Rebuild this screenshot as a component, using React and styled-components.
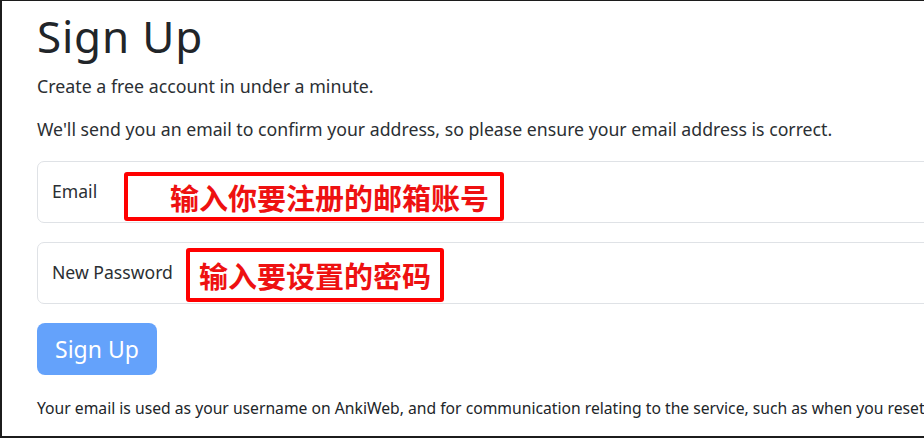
import React from "react";
import styled, { createGlobalStyle } from "styled-components";

const GlobalStyle = createGlobalStyle`
  html, body {
    margin: 0;
    padding: 0;
    background: #ffffff;
  }
  body {
    font-family: "Noto Sans", "Open Sans", Arial, sans-serif;
    color: #212529;
  }
`;

const fields = [
  {
    label: "Email",
    note: "输入你要注册的邮箱账号",
    noteLeft: 86,
    noteTop: 10,
    noteWidth: 380,
    noteHeight: 49,
    notePad: 42,
  },
  {
    label: "New Password",
    note: "输入要设置的密码",
    noteLeft: 148,
    noteTop: 5,
    noteWidth: 258,
    noteHeight: 54,
    notePad: 9,
  },
];

const App = () => {
  return (
    <>
      <GlobalStyle />
      <Frame>
        <Content>
          <Title>Sign Up</Title>
          <Lead>Create a free account in under a minute.</Lead>
          <Notice>
            We'll send you an email to confirm your address, so please ensure
            your email address is correct.
          </Notice>
          <Form>
            {fields.map((field) => (
              <Field key={field.label}>
                <FieldLabel>{field.label}</FieldLabel>
                <Annotation
                  $left={field.noteLeft}
                  $top={field.noteTop}
                  $width={field.noteWidth}
                  $height={field.noteHeight}
                  $pad={field.notePad}
                >
                  {field.note}
                </Annotation>
              </Field>
            ))}
            <SubmitButton type="button">Sign Up</SubmitButton>
          </Form>
          <FinePrint>
            Your email is used as your username on AnkiWeb, and for
            communication relating to the service, such as when you reset your
            password.
          </FinePrint>
        </Content>
      </Frame>
    </>
  );
};

export default App;

const Frame = styled.div`
  width: 924px;
  height: 438px;
  box-sizing: border-box;
  border-left: 2px solid #1c1c1c;
  border-top: 1px solid #1c1c1c;
  border-bottom: 2px solid #1c1c1c;
  overflow: hidden;
  background: #ffffff;
`;

const Content = styled.div`
  padding: 10px 0 0 35px;
  display: flex;
  flex-direction: column;
`;

const Title = styled.h1`
  margin: 0;
  font-size: 44px;
  line-height: 51px;
  font-weight: 400;
  color: #212529;
  letter-spacing: 0.8px;
`;

const Lead = styled.p`
  margin: 12px 0 0;
  font-size: 17.8px;
  line-height: 24px;
  color: #2b2f33;
  white-space: nowrap;
`;

const Notice = styled(Lead)`
  margin-top: 19px;
  font-size: 17.7px;
`;

const Form = styled.div`
  margin-top: 20px;
  display: flex;
  flex-direction: column;
  align-items: flex-start;
  gap: 19px;
`;

const Field = styled.div`
  position: relative;
  width: 1000px;
  height: 62px;
  box-sizing: border-box;
  border: 1px solid #dfe2e6;
  border-radius: 7px;
  padding-left: 14px;
  display: flex;
  align-items: center;
`;

const FieldLabel = styled.span`
  font-size: 17.6px;
  color: #2b2f33;
  margin-top: -2px;
`;

const Annotation = styled.div`
  position: absolute;
  left: ${(p) => p.$left}px;
  top: ${(p) => p.$top}px;
  width: ${(p) => p.$width}px;
  height: ${(p) => p.$height}px;
  box-sizing: border-box;
  border: 4px solid #ff0000;
  border-radius: 3px;
  padding-left: ${(p) => p.$pad}px;
  display: flex;
  align-items: center;
  font-family: "Noto Sans CJK SC", "Noto Sans", sans-serif;
  font-weight: 700;
  font-size: 29px;
  color: #ee1111;
  white-space: nowrap;
`;

const SubmitButton = styled.button`
  width: 120px;
  height: 52px;
  border: none;
  border-radius: 8px;
  background: #64a2fb;
  color: #ffffff;
  font-family: "Noto Sans", "Open Sans", Arial, sans-serif;
  font-size: 23px;
  padding: 0;
  cursor: default;
`;

const FinePrint = styled.p`
  margin: 23px 0 0;
  font-size: 15.7px;
  line-height: 20px;
  color: #212529;
  white-space: nowrap;
`;
